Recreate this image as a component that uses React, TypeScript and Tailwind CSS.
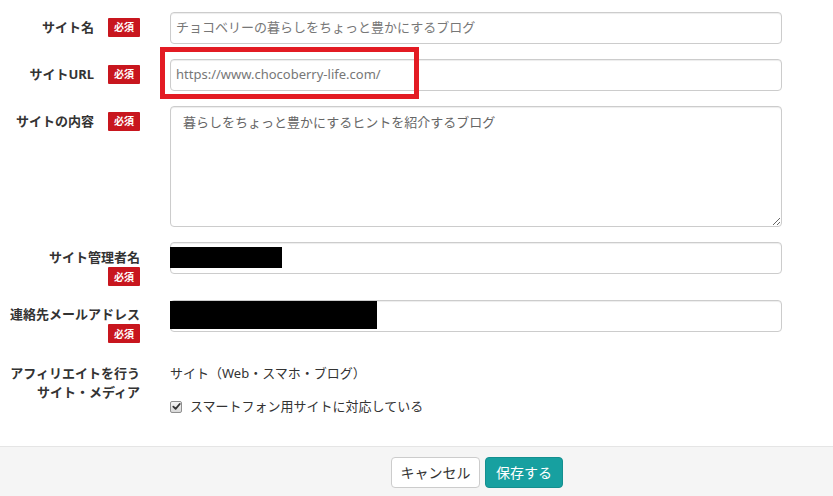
import React from "react";

const font = { fontFamily: '"Noto Sans", "Noto Sans CJK JP", sans-serif' };

function Badge() {
  return (
    <span className="inline-flex items-center justify-center w-[32px] h-[19px] bg-[#c8161e] text-white text-[10px] font-bold leading-none rounded-[1px] shrink-0">
      必須
    </span>
  );
}

function InlineLabel({ text }: { text: string }) {
  return (
    <div className="w-[155px] shrink-0 pr-[15px] pt-[5px] flex justify-end items-start">
      <div className="flex items-center gap-[14px]">
        <span className="text-[13px] font-bold leading-[20px] text-[#333]">{text}</span>
        <Badge />
      </div>
    </div>
  );
}

function StackLabel({ text, pt }: { text: string; pt: string }) {
  return (
    <div className={`w-[155px] shrink-0 pr-[15px] ${pt} flex flex-col items-end`}>
      <span className="text-[13px] font-bold leading-[20px] text-[#333] whitespace-nowrap">{text}</span>
      <Badge />
    </div>
  );
}

function Field({ children }: { children?: React.ReactNode }) {
  return (
    <div className="relative h-[32px] border border-[#ccc] rounded-[4px] bg-white shadow-[inset_0_1px_1px_rgba(0,0,0,0.075)] px-[5px] flex items-center text-[13px] text-[#777]">
      {children}
    </div>
  );
}

export default function App() {
  return (
    <div className="w-[833px] h-[496px] bg-white flex flex-col overflow-hidden" style={font}>
      <div className="flex-1 pt-[12px]">
        {/* サイト名 */}
        <div className="flex items-start mb-[15px]">
          <InlineLabel text="サイト名" />
          <div className="flex-1 pl-[15px] mr-[51px]">
            <Field>チョコベリーの暮らしをちょっと豊かにするブログ</Field>
          </div>
        </div>

        {/* サイトURL */}
        <div className="flex items-start mb-[15px]">
          <InlineLabel text="サイトURL" />
          <div className="relative flex-1 pl-[15px] mr-[51px]">
            <Field>https://www.chocoberry-life.com/</Field>
            <div className="absolute left-[5px] -top-[12px] w-[259px] h-[52px] border-[5px] border-[#e31b23] pointer-events-none" />
          </div>
        </div>

        {/* サイトの内容 */}
        <div className="flex items-start mb-[15px]">
          <InlineLabel text="サイトの内容" />
          <div className="flex-1 pl-[15px] mr-[51px]">
            <textarea
              readOnly
              defaultValue="暮らしをちょっと豊かにするヒントを紹介するブログ"
              className="block w-full h-[121px] border border-[#ccc] rounded-[4px] bg-white shadow-[inset_0_1px_1px_rgba(0,0,0,0.075)] px-[12px] py-[5px] text-[13px] leading-[20px] text-[#666] outline-none"
              style={font}
            />
          </div>
        </div>

        {/* サイト管理者名 */}
        <div className="flex items-start mb-[14px]">
          <StackLabel text="サイト管理者名" pt="pt-[5px]" />
          <div className="flex-1 pl-[15px] mr-[51px]">
            <Field>
              <div className="absolute left-[-1px] top-[4px] w-[112px] h-[21px] bg-black" />
            </Field>
          </div>
        </div>

        {/* 連絡先メールアドレス */}
        <div className="flex items-start mb-[15px]">
          <StackLabel text="連絡先メールアドレス" pt="pt-[4px]" />
          <div className="flex-1 pl-[15px] mr-[51px]">
            <Field>
              <div className="absolute left-[-1px] top-[0px] w-[207px] h-[28px] bg-black" />
            </Field>
          </div>
        </div>

        {/* アフィリエイト */}
        <div className="flex items-start">
          <div className="w-[155px] shrink-0 pr-[15px] pt-[6px] flex flex-col items-end">
            <span className="text-[13px] font-bold leading-[19px] text-[#333] whitespace-nowrap">アフィリエイトを行う</span>
            <span className="text-[13px] font-bold leading-[19px] text-[#333] whitespace-nowrap">サイト・メディア</span>
          </div>
          <div className="flex-1 pl-[15px] pt-[6px]">
            <div className="text-[13px] leading-[19px] text-[#333]">サイト（Web・スマホ・ブログ）</div>
            <div className="mt-[14px] flex items-center gap-[8px] text-[13px] leading-[19px] text-[#333]">
              <span className="w-[12px] h-[12px] border border-[#8f8f8f] rounded-[2px] bg-gradient-to-b from-[#f4f4f4] to-[#d8d8d8] flex items-center justify-center">
                <svg width="9" height="9" viewBox="0 0 10 10">
                  <path d="M1.5 5.2 L4 7.6 L8.6 2.2" fill="none" stroke="#333" strokeWidth="2" strokeLinecap="round" strokeLinejoin="round" />
                </svg>
              </span>
              <span>スマートフォン用サイトに対応している</span>
            </div>
          </div>
        </div>
      </div>

      {/* footer */}
      <div className="h-[50px] shrink-0 border-t border-[#e5e5e5] bg-[#f5f5f5] flex items-start pt-[10px] pl-[391px] gap-[5px]">
        <button className="w-[89px] h-[31px] rounded-[4px] border border-[#ccc] bg-white text-[14px] text-[#333] flex items-center justify-center" style={font}>
          キャンセル
        </button>
        <button className="w-[78px] h-[31px] rounded-[4px] border border-[#148f8f] bg-[#17a0a0] text-[14px] text-white flex items-center justify-center" style={font}>
          保存する
        </button>
      </div>
    </div>
  );
}
